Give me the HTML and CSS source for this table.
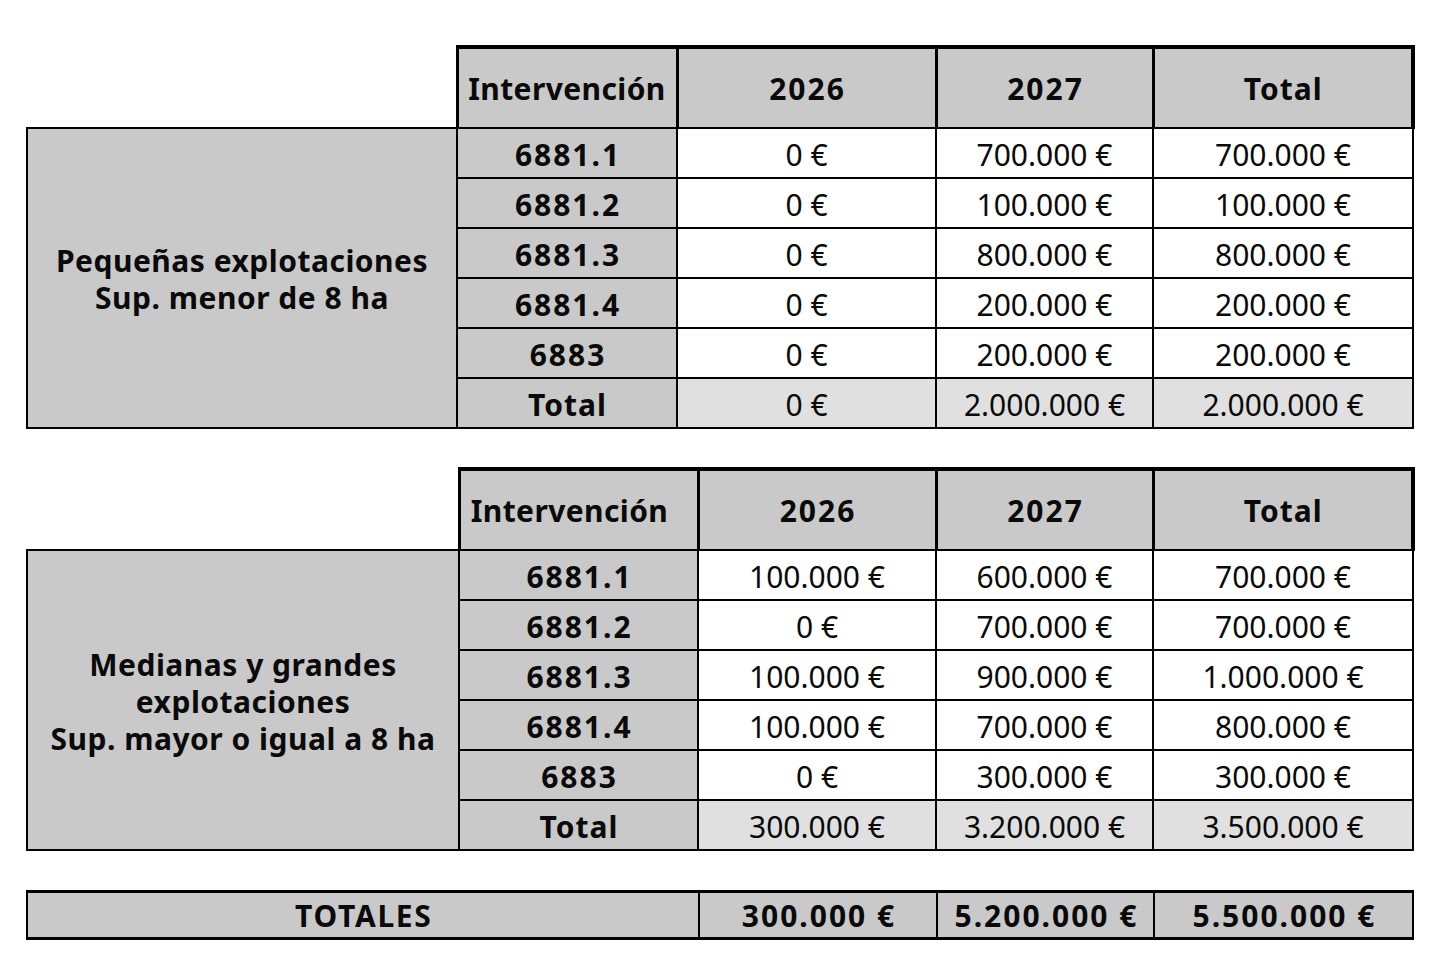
FILE: index.html
```html
<!DOCTYPE html>
<html lang="es">
<head>
<meta charset="utf-8">
<title>Intervenciones</title>
<link rel="stylesheet" href="styles.css">
</head>
<body>
<main class="page">
  <table class="grid g1">
    <colgroup><col class="c0"><col class="c1"><col class="c2"><col class="c3"><col class="c4"></colgroup>
    <thead>
      <tr><th class="blank"></th><th class="h word">Intervención</th><th class="h num">2026</th><th class="h num">2027</th><th class="h last word1">Total</th></tr>
    </thead>
    <tbody>
      <tr><th class="label" rowspan="6">Pequeñas explotaciones<br>Sup. menor de 8 ha</th><th class="code num">6881.1</th><td>0 €</td><td>700.000 €</td><td>700.000 €</td></tr>
      <tr><th class="code num">6881.2</th><td>0 €</td><td>100.000 €</td><td>100.000 €</td></tr>
      <tr><th class="code num">6881.3</th><td>0 €</td><td>800.000 €</td><td>800.000 €</td></tr>
      <tr><th class="code num">6881.4</th><td>0 €</td><td>200.000 €</td><td>200.000 €</td></tr>
      <tr><th class="code num">6883</th><td>0 €</td><td>200.000 €</td><td>200.000 €</td></tr>
      <tr class="sum"><th class="code word1">Total</th><td>0 €</td><td>2.000.000 €</td><td>2.000.000 €</td></tr>
    </tbody>
  </table>

  <table class="grid g2">
    <colgroup><col class="c0"><col class="c1"><col class="c2"><col class="c3"><col class="c4"></colgroup>
    <thead>
      <tr><th class="blank"></th><th class="h word shift">Intervención</th><th class="h num">2026</th><th class="h num">2027</th><th class="h last word1">Total</th></tr>
    </thead>
    <tbody>
      <tr><th class="label" rowspan="6">Medianas y grandes<br>explotaciones<br>Sup. mayor o igual a 8 ha</th><th class="code num">6881.1</th><td>100.000 €</td><td>600.000 €</td><td>700.000 €</td></tr>
      <tr><th class="code num">6881.2</th><td>0 €</td><td>700.000 €</td><td>700.000 €</td></tr>
      <tr><th class="code num">6881.3</th><td>100.000 €</td><td>900.000 €</td><td>1.000.000 €</td></tr>
      <tr><th class="code num">6881.4</th><td>100.000 €</td><td>700.000 €</td><td>800.000 €</td></tr>
      <tr><th class="code num">6883</th><td>0 €</td><td>300.000 €</td><td>300.000 €</td></tr>
      <tr class="sum"><th class="code word1">Total</th><td>300.000 €</td><td>3.200.000 €</td><td>3.500.000 €</td></tr>
    </tbody>
  </table>

  <table class="totals">
    <colgroup><col class="t0"><col class="t1"><col class="t2"><col class="t3"></colgroup>
    <tbody>
      <tr><th class="caps">TOTALES</th><td class="num">300.000 €</td><td class="num">5.200.000 €</td><td class="num">5.500.000 €</td></tr>
    </tbody>
  </table>
</main>
</body>
</html>
```

FILE: styles.css
```css
html, body {
  margin: 0;
  padding: 0;
  background: #ffffff;
}

body {
  font-family: "Noto Sans", "Liberation Sans", sans-serif;
  color: #0a0a0a;
}

.page {
  padding-top: 45px;
  display: flex;
  flex-direction: column;
  align-items: flex-start;
}

table {
  border-collapse: collapse;
  table-layout: fixed;
  margin-left: 26px;
}

.grid {
  width: 1386px;
}

.grid th,
.grid td {
  border: 2px solid #000;
  padding: 2px 0 0 0;
  text-align: center;
  vertical-align: middle;
  font-size: 30px;
  line-height: 37px;
  height: 46px;
  white-space: nowrap;
}

.grid td {
  font-weight: 400;
  background: #ffffff;
}

.grid th {
  font-weight: 700;
  background: #c9c9c9;
}

.grid thead th.blank {
  border: none;
  background: transparent;
}

.grid thead th.h {
  height: 78px;
  padding: 0;
  border-top: 4px solid #000;
  border-left: 3px solid #000;
  border-right: 3px solid #000;
  border-bottom: 2px solid #000;
}

.grid thead th.last {
  border-right: 4px solid #000;
}

.num {
  letter-spacing: 2px;
  text-indent: 2px;
}

.word {
  letter-spacing: 0.4px;
}

.word1 {
  letter-spacing: 1px;
  text-indent: 1px;
}

.caps {
  letter-spacing: 1.7px;
  text-indent: 1.7px;
}

.grid thead th.shift {
  padding-right: 18px;
}

.grid th.label {
  line-height: 37px;
  letter-spacing: 0.5px;
  padding: 2px 0 0 0;
}

.grid tr.sum td {
  background: #e0e0e0;
}

.g1 .c0 { width: 430px; }
.g1 .c1 { width: 220px; }
.g1 .c2 { width: 259px; }
.g1 .c3 { width: 217px; }
.g1 .c4 { width: 260px; }

.g2 {
  margin-top: 38px;
}

.g2 .c0 { width: 432px; }
.g2 .c1 { width: 239px; }
.g2 .c2 { width: 238px; }
.g2 .c3 { width: 217px; }
.g2 .c4 { width: 260px; }

.totals {
  width: 1386px;
  margin-top: 39px;
}

.totals .t0 { width: 672px; }
.totals .t1 { width: 238px; }
.totals .t2 { width: 217px; }
.totals .t3 { width: 259px; }

.totals th,
.totals td {
  font-size: 30px;
  font-weight: 700;
  line-height: 37px;
  height: 44px;
  padding: 0;
  text-align: center;
  background: #c9c9c9;
  border: 2px solid #000;
  border-top: 3px solid #000;
  border-bottom: 3px solid #000;
  white-space: nowrap;
}
```
